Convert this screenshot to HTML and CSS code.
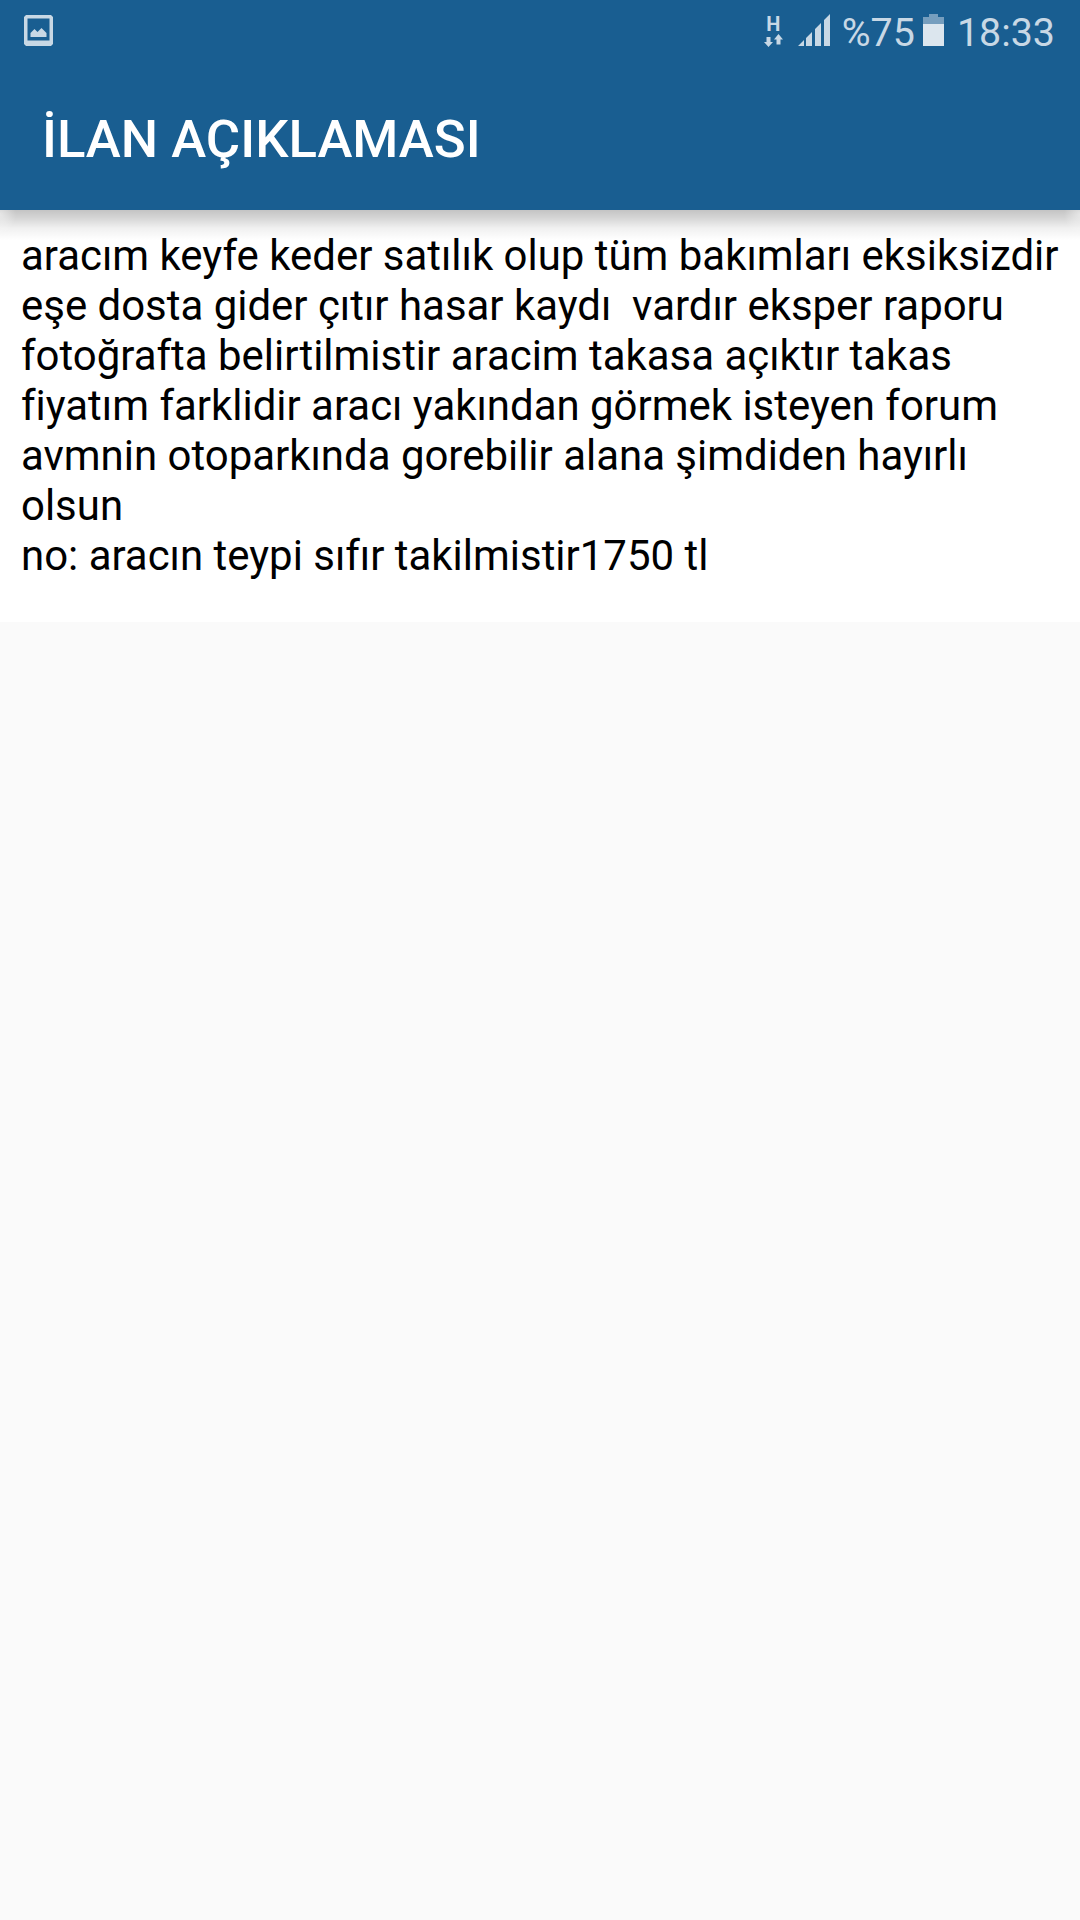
FILE: index.html
```html
<!DOCTYPE html>
<html lang="tr">
<head>
    <meta charset="UTF-8">
    <meta name="viewport" content="width=device-width, initial-scale=1.0">
    <title>İlan Açıklaması</title>
    <link rel="stylesheet" href="styles.css">
</head>
<body>
    <header class="app-header">
        <div class="status-bar">
            <svg class="icon-image" width="29" height="31" viewBox="0 0 29 31">
                <path d="M2 0h25l2 2v27l-2 2H2l-2-2V2zM3.5 3.5v22h22v-22z" fill="currentColor" fill-rule="evenodd"/>
                <path d="M6.5 22v-4l4-4 3 3 4-4 5 5v4z" fill="currentColor"/>
            </svg>
            <div class="status-right">
                <div class="network">
                    <span class="network-type">H</span>
                    <svg class="network-arrows" width="19" height="13" viewBox="0 0 19 13">
                        <path d="M2.5 3h4v5H9l-4.500 5L0 8h2.500zM14.500 0L19 5.500h-2.500V10.500h-4V5.500H10z" fill="currentColor"/>
                    </svg>
                </div>
                <svg class="icon-signal" width="32" height="32" viewBox="0 0 32 32">
                    <path d="M0 32h6v-6zM8 32h6V18l-6 6zM17 32h6V9l-6 6zM26 32h6V0l-6 6z" fill="currentColor"/>
                </svg>
                <span class="battery-text">%75</span>
                <svg class="icon-battery" width="21" height="32" viewBox="0 0 21 32">
                    <path d="M0 3h6V0h9v3h6v7H0z" fill="#769ebe"/>
                    <path d="M0 10h21v22H0z" fill="#dce6ee"/>
                </svg>
                <span class="clock">18:33</span>
            </div>
        </div>
        <h1 class="title">İLAN AÇIKLAMASI</h1>
    </header>
    <main class="description">aracım keyfe keder satılık olup tüm bakımları eksiksizdir eşe dosta gider çıtır hasar kaydı  vardır eksper raporu fotoğrafta belirtilmistir aracim takasa açıktır takas fiyatım farklidir aracı yakından görmek isteyen forum avmnin otoparkında gorebilir alana şimdiden hayırlı olsun
no: aracın teypi sıfır takilmistir1750 tl</main>
</body>
</html>
```
FILE: styles.css
```css
body {
    margin: 0;
    background: #fafafa;
    font-family: Roboto, sans-serif;
}
.app-header {
    position: relative;
    height: 210px;
    background: #195e91;
    color: #fff;
}
/* тень под шапкой */
.app-header::after {
    content: "";
    position: absolute;
    top: 210px;
    left: 0;
    right: 0;
    height: 30px;
    background: radial-gradient(ellipse 16px 20px at 0 4px, rgba(255,255,255,0.5), transparent),
        radial-gradient(ellipse 16px 20px at 100% 4px, rgba(255,255,255,0.5), transparent),
        linear-gradient(rgba(0,0,0,0.23), rgba(0,0,0,0.17) 25%, rgba(0,0,0,0.06) 60%, transparent);
}
.status-bar {
    display: flex;
    justify-content: space-between;
    align-items: flex-start;
    height: 66px;
    box-sizing: border-box;
    padding: 14px 25px 0 24px;
    color: #c8d8e5;
    font-size: 39.4px;
    line-height: 38px;
}
.icon-image {
    margin-top: 1px;
}
.status-right {
    display: flex;
    align-items: flex-start;
}
.network {
    display: flex;
    flex-direction: column;
    align-items: center;
    width: 19px;
    margin-right: 15px;
}
.network-type {
    height: 20px;
    font-size: 20px;
    font-weight: 700;
    line-height: 20px;
}
.icon-signal {
    margin-right: 12px;
}
.battery-text {
    margin-right: 8px;
}
.icon-battery {
    margin-right: 13px;
}
.title {
    margin: 0;
    padding-left: 42px;
    font-size: 52.7px;
    font-weight: 500;
    line-height: 146px;
}
.description {
    padding: 21px 10px 41px 21px;
    background: #fff;
    color: #000;
    font-size: 41.95px;
    line-height: 50px;
    white-space: pre-wrap;
}
```
